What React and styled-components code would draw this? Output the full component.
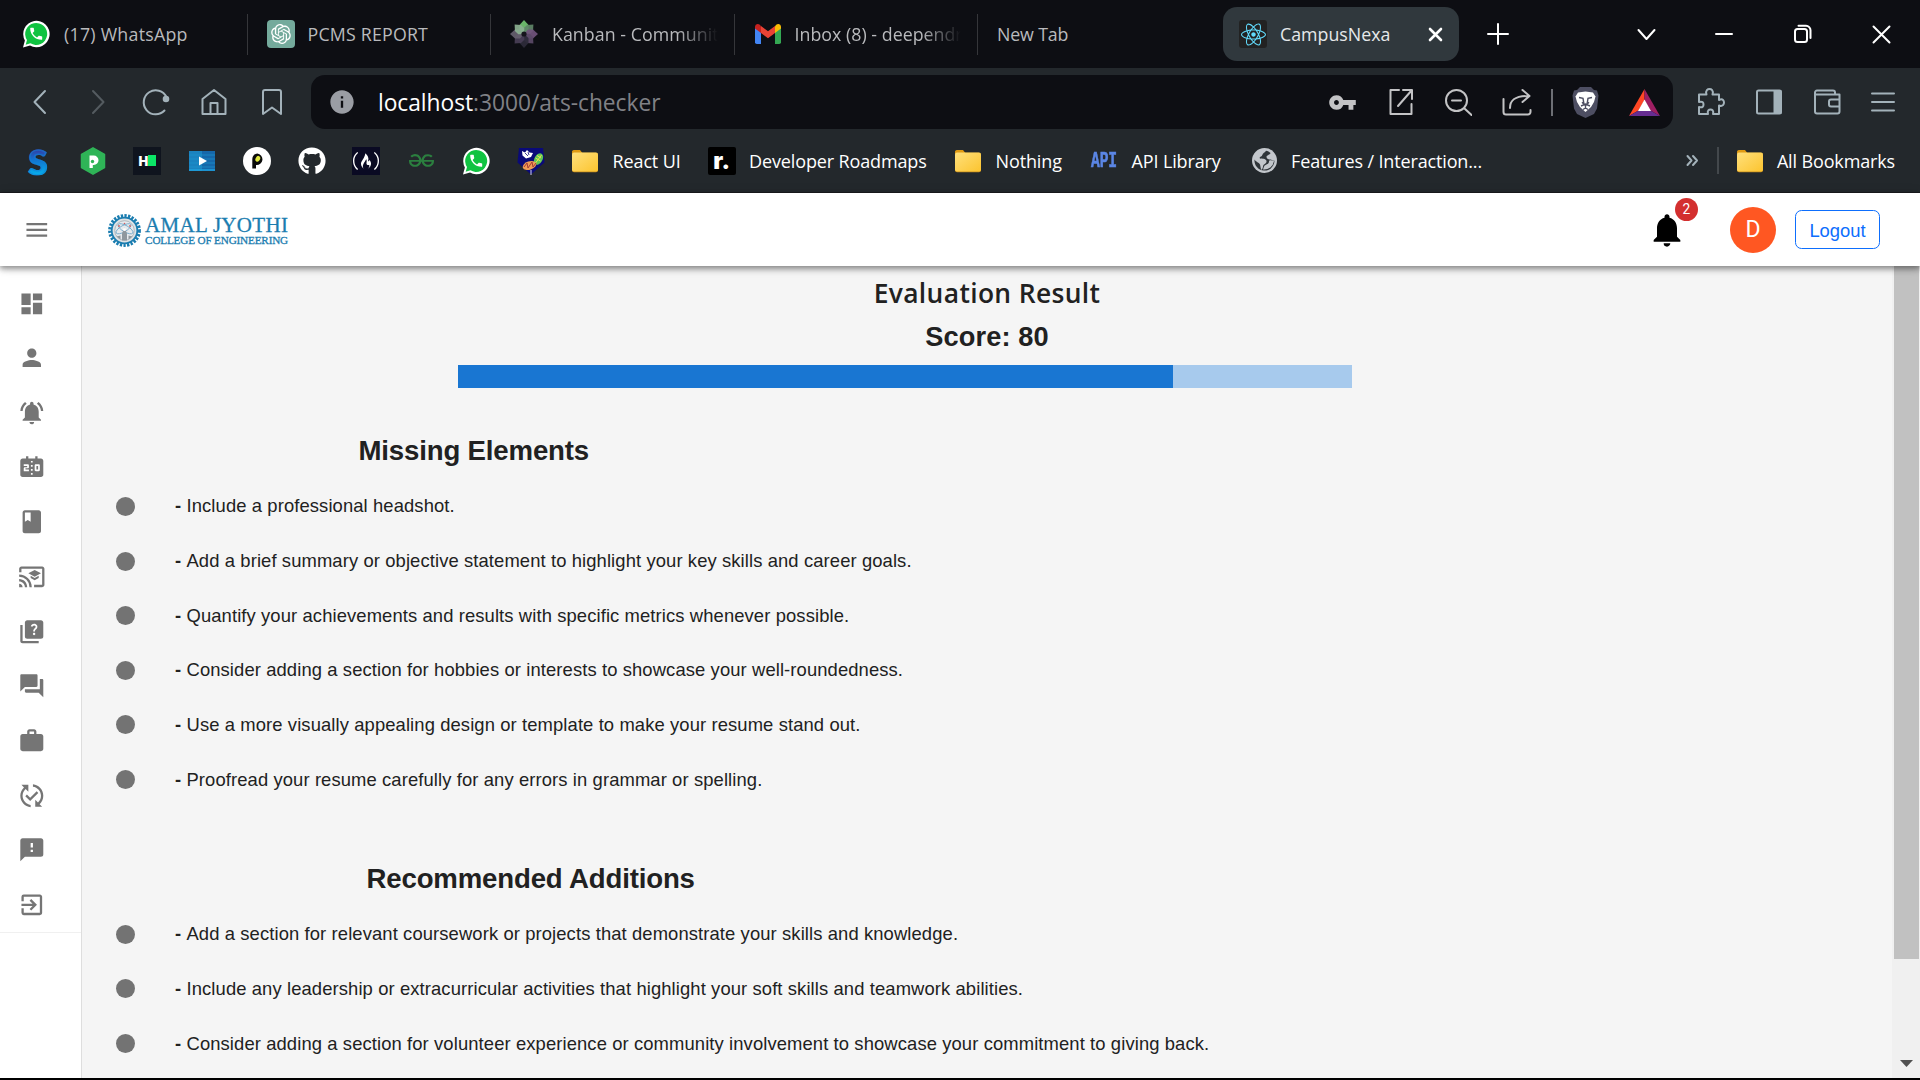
import React from "react";
import styled, { createGlobalStyle } from "styled-components";
import {
  MdDashboard, MdPerson, MdNotificationsActive, MdScoreboard, MdBook, MdCastForEducation,
  MdQuiz, MdQuestionAnswer, MdWork, MdPublishedWithChanges, MdFeedback, MdExitToApp,
  MdMenu, MdNotifications, MdVpnKey, MdPhone, MdInfo,
} from "react-icons/md";
import { FaGithub, FaReact } from "react-icons/fa";
import { SiFreecodecamp, SiGeeksforgeeks } from "react-icons/si";
import { RiOpenaiFill } from "react-icons/ri";

const Global = createGlobalStyle`
  * { box-sizing: border-box; }
  body { margin: 0; background: #000; overflow: hidden; font-family: "Liberation Sans", Arial, sans-serif; }
  svg { display: block; flex: none; }
`;

const Screen = styled.div`
  width: 1920px; height: 1080px; display: flex; flex-direction: column;
  background: #f5f5f5; border-bottom: 2px solid #000; overflow: hidden;
`;

const uiFont = `"Open Sans", "Noto Sans", sans-serif`;

/* ---------- browser chrome ---------- */
const TabStrip = styled.div`
  height: 68px; flex: none; background: #0d0e13; display: flex; align-items: center; padding: 0 29px 0 4px;
`;
const Tab = styled.div`
  width: ${(p) => p.$w || 243.5}px; height: 41px; padding: 0 ${(p) => p.$pr ?? 16}px 0 ${(p) => p.$pl ?? 19}px;
  display: flex; align-items: center; gap: ${(p) => p.$gap || 13}px;
  border-right: ${(p) => (p.$last ? "none" : "1.5px solid #35363a")};
`;
const ActiveTab = styled.div`
  width: 236px; height: 54px; border-radius: 14px; background: #30383d;
  display: flex; align-items: center; padding: 0 16px; margin-right: 28px; gap: 13px;
`;
const TabText = styled.span`
  font: 400 17.8px ${uiFont}; letter-spacing: ${(p) => p.$ls ?? -0.14}px; color: ${(p) => p.$c || "#b9babd"};
  white-space: nowrap; overflow: hidden; flex: 1; line-height: 28px;
  ${(p) => p.$fade && "mask-image: linear-gradient(90deg, #000 calc(100% - 40px), transparent);"}
`;
const Spacer = styled.div`flex: 1;`;
const WindowButtons = styled.div`display: flex; align-items: center; gap: 59.4px;`;

const Toolbar = styled.div`
  height: 68px; flex: none; background: #23282c; display: flex; align-items: center; padding: 0 22px 0 25.5px; color: #a3b2ba;
`;
const NavButtons = styled.div`display: flex; width: 285.5px; gap: 30.2px; padding-bottom: 1px;`;
const AddressBar = styled.div`
  width: 1362px; height: 54px; border-radius: 14px; background: #0d0e13;
  display: flex; align-items: center; padding: 0 13.5px 0 17px;
`;
const Url = styled.div`
  font: 400 22.8px ${uiFont}; letter-spacing: -0.05px; color: #808186; margin-left: 22px; flex: 1; line-height: 34px; padding-top: 1.5px;
  b { font-weight: 400; color: #fff; }
`;
const AddressIcons = styled.div`display: flex; align-items: center; gap: 29.5px; color: #c3c3c5;`;
const Rule = styled.div`
  width: 1.5px; height: ${(p) => p.$h}px; background: ${(p) => p.$c}; margin: 0 ${(p) => p.$mr}px 0 ${(p) => p.$ml}px;
`;
const ToolIcons = styled.div`display: flex; align-items: center; gap: 29.9px; margin-left: 24px;`;

const Bookmarks = styled.div`
  height: 57px; flex: none; background: #23282c; display: flex; align-items: center;
  padding: 0 25px 7px 10.6px; border-bottom: 1px solid #1b1c20; color: #a3b2ba;
`;
const IconMark = styled.div`width: 54.75px; flex: none; display: flex; justify-content: center;`;
const TextMarks = styled.div`display: flex; margin-left: 13px;`;
const Mark = styled.div`
  width: ${(p) => (p.$w ? `${p.$w}px` : "auto")}; flex: none; display: flex; align-items: center; gap: ${(p) => p.$gap || 13.5}px;
  font: 400 18px ${uiFont}; letter-spacing: -0.14px; color: #fff; white-space: nowrap; line-height: 28px;
`;
const Tile = styled.div`
  width: ${(p) => p.$s || 28}px; height: ${(p) => p.$h || p.$s || 28}px; flex: none; background: ${(p) => p.$bg}; color: #fff;
  border-radius: ${(p) => p.$r || 0}px; display: flex; align-items: center; justify-content: center;
`;
const HeavyS = styled.span`
  font: 900 35px/28px Lato, sans-serif; background: linear-gradient(#3a2f9a, #1273d0 45%, #06b0ec);
  -webkit-background-clip: text; color: transparent; -webkit-text-stroke: 1.5px #1180d888;
`;
const TileText = styled.span`
  font: 900 ${(p) => p.$s || 17}px/20px Inter, sans-serif; color: #fff;
`;
const ApiText = styled.span`
  font: 700 14.6px/20px "Liberation Mono", monospace; color: #5b86e5; width: 26px; transform: scaleY(1.45);
  -webkit-text-stroke: .4px #5b86e5;
`;

/* ---------- application ---------- */
const AppHeader = styled.header`
  height: 73px; flex: none; background: #fff; display: flex; align-items: center; padding: 0 40px 0 23px;
  box-shadow: 0 2px 5px rgba(0,0,0,.28), 0 4px 6px rgba(0,0,0,.16), 0 1px 11px rgba(0,0,0,.13); z-index: 2; position: relative;
`;
const Logo = styled.div`display: flex; align-items: center; gap: 4.5px; margin-left: 57px; padding-top: 2px; color: #1b7db0;`;
const LogoText = styled.div`
  display: flex; flex-direction: column; font-family: "Liberation Serif", serif; white-space: nowrap; width: 145px;
  -webkit-text-stroke: .3px #1b7db0;
  strong { font-weight: 400; font-size: 21px; line-height: 18px; letter-spacing: .3px; }
  span { font-size: 11.2px; line-height: 12px; letter-spacing: -.17px; }
`;
const BellWrap = styled.div`position: relative; width: 40px; height: 40px; margin-right: 43px;`;
const Count = styled.span`
  position: absolute; left: 28px; top: -11.5px; width: 23px; height: 23px; border-radius: 50%;
  background: #d32f2f; color: #fff; font: 400 13.8px/23px Roboto, sans-serif; text-align: center;
`;
const Avatar = styled.div`
  width: 46px; height: 46px; border-radius: 50%; background: #ff5722; color: #fff;
  font: 400 23px/46px Roboto, sans-serif; text-align: center; margin-right: 19px;
`;
const Logout = styled.button`
  width: 85px; height: 39px; border: 1.3px solid #0d6efd; border-radius: 6.5px; background: #fff; color: #0d6efd;
  font: 400 18.4px "Liberation Sans", Arial, sans-serif; padding: 2px 0 0;
`;
const Body = styled.div`flex: 1; min-height: 0; display: flex;`;
const Sidebar = styled.nav`width: 82px; background: #fff; border-right: 1px solid #dedede; flex: none;`;
const SideList = styled.div`border-bottom: 1px solid #f0f0f0; padding: 10.3px 18px 0 0; display: flex; flex-direction: column; height: 667px;`;
const SideItem = styled.div`height: 54.65px; display: flex; align-items: center; justify-content: center; color: #757575;`;
const Main = styled.main`flex: 1; min-width: 0; padding-top: 5px; color: #212121; overflow: hidden;`;
const Title = styled.h1`
  margin: 0; height: 44px; line-height: 44px; text-align: center; white-space: nowrap;
  font-family: ${(p) => (p.$round ? `"Open Sans", sans-serif` : `"Liberation Sans", Arial, sans-serif`)};
  font-weight: ${(p) => (p.$round ? 600 : 700)}; font-size: ${(p) => (p.$round ? 26.4 : 27.2)}px;
  letter-spacing: ${(p) => (p.$round ? 0.36 : 0.1)}px;
`;
const Track = styled.div`width: 894px; height: 23px; margin: 6px 0 41px 376px; background: #a7caed;`;
const Fill = styled.div`height: 100%; background: #1976d2;`;
const Heading = styled.h2`
  margin: 0 0 6.2px; padding-left: ${(p) => p.$left}px; height: 44px; font-size: 27.6px; line-height: 44px; font-weight: 700; letter-spacing: -.16px;
`;
const List = styled.ul`list-style: none; margin: 0 0 50px; padding: 0;`;
const Item = styled.li`
  height: 54.62px; display: flex; align-items: center; padding-left: 34px; font-size: 18.4px; letter-spacing: .108px; white-space: nowrap;
`;
const Bullet = styled.i`width: 19px; height: 19px; border-radius: 50%; background: #737373; margin-right: 40px;`;
const Dash = styled.b`width: 11.5px; font-weight: 700;`;
const Scroll = styled.div`
  width: 28px; flex: none; background: #f0f0f0; padding: 0 1px 11px 2px; display: flex; flex-direction: column; justify-content: space-between; align-items: center;
`;
const Thumb = styled.div`width: 25px; height: 693px; background: #c1c1c1;`;

/* ---------- drawings ---------- */
const Stroke = ({ w = 28, h = 28, sw = 2, children }) => (
  <svg width={w} height={h} viewBox={`0 0 ${w} ${h}`} fill="none" stroke="currentColor" strokeWidth={sw} strokeLinecap="round" strokeLinejoin="round">{children}</svg>
);
const WhatsApp = () => (
  <svg width="28" height="28" viewBox="0 0 28 28">
    <path d="M1 27.5 2.9 20.4A13.2 13.2 0 1 1 8 25.5z" fill="#fff" />
    <path d="M3.7 24.8 5 20A11 11 0 1 1 8.4 23.3z" fill="#10c341" />
    <g transform="translate(6.2 5.8)"><MdPhone size={16} color="#fff" /></g>
  </svg>
);
const Folder = () => (
  <svg width="28" height="28" viewBox="0 0 28 28">
    <path d="M1 4.5A1.8 1.8 0 0 1 2.8 3H9l2.4 3H25v8H1z" fill="#e09a12" />
    <rect x="1" y="5.8" width="26" height="19.4" rx="2" fill="#c98f1c" />
    <rect x="1" y="5.4" width="26" height="19" rx="2" fill="url(#fold)" />
    <defs><linearGradient id="fold" x1="0" y1="0" x2="1" y2="1"><stop stopColor="#ffe07c" /><stop offset="1" stopColor="#fcc42f" /></linearGradient></defs>
  </svg>
);
const Globe = () => (
  <svg width="27" height="27" viewBox="0 0 27 27">
    <circle cx="13.5" cy="13.5" r="12.5" fill="#c3c7cc" />
    <path d="M13 4.500c4-.8 7 1 8.500 4l-4 1.500-1 3-3.500.5-2 3h-3L5 13.500c-.5-4 3-8 8-9z" fill="#23282c" opacity="0" />
    <path d="M15 3.800c-1 2.200-3.200 2-3.700 4.200-.3 1.500-2.300 1.500-2.800 3 1.500 1.500 5 0 6.500 2s-.5 3.500-2 4.500-.5 3.500-2.500 5.500c-1-1.500-1-4-1.500-5.500S4.500 14.500 3.500 12.500c-.5 5 3 10.500 9.500 11 6 .3 10.500-4.500 10.500-10-1.500 1-2.500-1-4-1s-4-.5-4-2.500 3.500-2 4-4c-1.200-1.200-2.700-2-4.500-2.200z" fill="#23282c" opacity=".92" />
    <path d="M12 22.500c1-2 .5-3.500 2.500-4.500s3.500-1.500 3.500-3.500 3-1 5-.5a10 10 0 0 1-11 8.500z" fill="#c3c7cc" />
  </svg>
);
const Kanban = () => (
  <svg width="28" height="28" viewBox="-14 -14 28 28">
    {["#72c472", "#5f8568", "#71547d", "#5b4a68", "#2e2b3b", "#493f57", "#66606f", "#8bb091"].map((c, i) => (
      <path key={i} d="M0-14 4.500-9V-4L0 0-4.500-4V-9z" fill={c} opacity=".92" transform={`rotate(${i * 45}) ${i % 2 ? "scale(.95)" : ""}`} />
    ))}
    <circle r="2.6" fill="#15151c" />
  </svg>
);
const Gmail = () => (
  <svg width="26" height="20" viewBox="0 0 26 20">
    <path d="M0 3v15.200a1.800 1.800 0 0 0 1.800 1.800H6V8z" fill="#4285f4" />
    <path d="M26 3v15.200a1.800 1.800 0 0 1-1.800 1.800H20V8z" fill="#34a853" />
    <path d="M20 2.200V9l6-4.500V3c0-2.700-2.800-3.800-4.800-2.200z" fill="#fbbc04" />
    <path d="M6 9V2l7 5.300L20 2v7l-7 5.300z" fill="#ea4335" />
    <path d="M0 3v1.500L6 9V2.200L4.800.8C2.800-.8 0 .3 0 3z" fill="#c5221f" />
  </svg>
);
const Hexagon = () => (
  <svg width="26" height="28" viewBox="0 0 26 28">
    <path d="M13 .8 24.500 7.500V20.500L13 27.200 1.500 20.500V7.500z" fill="#2fb457" stroke="#2fb457" strokeWidth="1.500" strokeLinejoin="round" />
    <path d="M9.500 8.500h4.300a4.700 4.700 0 0 1 0 9.400h-1v3h-3.300z" fill="#fff" />
    <circle cx="12.500" cy="14.500" r="1.700" fill="#2fb457" />
  </svg>
);
const Player = () => (
  <svg width="26" height="20" viewBox="0 0 26 20">
    <path d="M0 0h26v20H0z" fill="#1b83c0" /><path d="M13 0h13v20H13z" fill="#1668aa" />
    <path d="M0 4h26M0 8h26M0 12h26M0 16h26" stroke="#1c96cf" strokeWidth=".7" /><path d="M10 5.500 18 10l-8 4.500z" fill="#fff" />
    <path d="M0 19h26" stroke="#21a0dc" strokeWidth="1.500" />
  </svg>
);
const PeerCircle = () => (
  <svg width="28" height="28" viewBox="0 0 28 28">
    <circle cx="14" cy="14" r="14" fill="#fff" />
    <path d="M14.300 6.500A5.700 5.700 0 1 1 13 18v3.500H9.300V12a5.500 5.500 0 0 1 5-5.500z" fill="#0b0b0b" />
    <ellipse cx="14.800" cy="11.800" rx="2.200" ry="3" fill="#e1ea3f" transform="rotate(30 14.800 11.800)" />
  </svg>
);
const Crest = () => (
  <svg width="28" height="28" viewBox="0 0 28 28">
    <path d="M2 1h24l1.500 14.500L14 27.500.5 15.500z" fill="#0a0a78" />
    <path d="M5 4l3 1.500 2-2.500 2.500 2.500 3.500.5-2 4-5 1.500-3.500-3z" fill="#fff" /><path d="M8 6l3 3M11 5l1 3" stroke="#0a0a78" strokeWidth=".8" />
    <ellipse cx="21.500" cy="12" rx="4" ry="6.200" transform="rotate(30 21.500 12)" fill="#5dc657" /><path d="M18.500 16l6-8M18.500 11l5 3M20 8.500l4 2.500" stroke="#e8e34d" strokeWidth="1" />
    <ellipse cx="12.500" cy="18.500" rx="7" ry="4.200" transform="rotate(-18 12.500 18.500)" fill="#ef9b55" />
    <path d="M7 20l3-4 1 5 4-6 1 5 3-4" stroke="#a43b35" fill="none" /><path d="M14 23v5" stroke="#d7d7e8" />
  </svg>
);
const Lion = () => (
  <svg width="27" height="31" viewBox="0 0 27 31">
    <path d="M8 0h11l3 3 3 .5 1.500 5-1.500 13L22 27l-8.500 4L5 27 2 21.500.5 8.500 2 3.500 5 3z" fill="#4d4e62" />
    <path d="M6 5.500 13.500 4.500 21 5.500l2.500 4-1.500 5.500-3 5-5.500 5-5.500-5-3-5L3.500 9.500z" fill="#fff" />
    <path d="M7 10.500l4 .8 1 6-2-2M20 10.500l-4 .8-1 6 2-2M9 19l4.500-2 4.500 2M13.500 18v4M11 22.500l2.500-1.500 2.500 1.500" stroke="#4d4e62" strokeWidth="1.400" fill="none" />
  </svg>
);
const Bat = () => (
  <svg width="31" height="27" viewBox="0 0 31 27">
    <path d="M15.500 0V11L9.500 21.500 0 27z" fill="#ff4724" /><path d="M15.500 0 31 27l-9.500-5.500-6-10.500z" fill="#9e1f63" />
    <path d="M0 27 9.500 21.500h12L31 27z" fill="#662d91" /><path d="M15.500 10.500 22 22H9z" fill="#fff" />
  </svg>
);
const Seal = () => (
  <svg width="33" height="33" viewBox="-16.500 -16.500 33 33">
    <circle r="14.700" fill="none" stroke="#1b7db0" strokeWidth="3.400" strokeDasharray="2.300 1.318" />
    <circle r="12.800" fill="#dfe3e6" stroke="#1b7db0" strokeWidth="1.800" /><circle r="9.800" fill="#e6eaed" stroke="#9aa5ac" strokeWidth=".7" />
    <g fill="none" stroke="#6fa6c8" strokeWidth=".8"><ellipse rx="8.500" ry="3.200" cy="-2" transform="rotate(30)" /><ellipse rx="8.500" ry="3.200" cy="-2" transform="rotate(-30)" /></g>
    <path d="M-2.500 10V3L0-3l2.500 6v7zM-8 6l4-1v4zM8 6l-4-1v4z" fill="#8f989e" /><circle cy="-1" r="1.500" fill="#fff" />
    <circle cx="-5.500" cy="-4.500" r=".9" fill="#d65c5c" /><circle cx="5.500" cy="-4.500" r=".9" fill="#d65c5c" /><circle cy="-7" r=".8" fill="#d65c5c" />
  </svg>
);

const sideIcons = [
  MdDashboard, MdPerson, MdNotificationsActive, MdScoreboard, MdBook, MdCastForEducation,
  MdQuiz, MdQuestionAnswer, MdWork, MdPublishedWithChanges, MdFeedback, MdExitToApp,
];
const missing = [
  "Include a professional headshot.",
  "Add a brief summary or objective statement to highlight your key skills and career goals.",
  "Quantify your achievements and results with specific metrics whenever possible.",
  "Consider adding a section for hobbies or interests to showcase your well-roundedness.",
  "Use a more visually appealing design or template to make your resume stand out.",
  "Proofread your resume carefully for any errors in grammar or spelling.",
];
const recommended = [
  "Add a section for relevant coursework or projects that demonstrate your skills and knowledge.",
  "Include any leadership or extracurricular activities that highlight your soft skills and teamwork abilities.",
  "Consider adding a section for volunteer experience or community involvement to showcase your commitment to giving back.",
];

const Points = ({ items }) => (
  <List>
    {items.map((t) => (
      <Item key={t}><Bullet /><Dash>-</Dash>{t}</Item>
    ))}
  </List>
);

export default function App() {
  const score = 80;
  return (
    <Screen>
      <Global />
      <TabStrip>
        <Tab $pl={18} $gap={14}><WhatsApp /><TabText $ls={0.25}>(17) WhatsApp</TabText></Tab>
        <Tab><Tile $bg="#74aa9c" $r={4}><RiOpenaiFill size={24} /></Tile><TabText $ls={0.2}>PCMS REPORT</TabText></Tab>
        <Tab $gap={14}><Kanban /><TabText $fade $ls={0.05}>Kanban - Communit</TabText></Tab>
        <Tab $pl={20} $gap={14}><Gmail /><TabText $fade $ls={0.02}>Inbox (8) - deependr</TabText></Tab>
        <Tab $last $w={245} $pl={19}><TabText>New Tab</TabText></Tab>
        <ActiveTab>
          <Tile $bg="#222" $r={3}><FaReact size={25} color="#61dafb" /></Tile>
          <TabText $c="#e6e8ea" $ls={0}>CampusNexa</TabText>
          <Stroke w={15} h={15} sw={2.6}><g stroke="#fff"><path d="M2 2l11 11M13 2 2 13" /></g></Stroke>
        </ActiveTab>
        <Stroke w={22} h={22} sw={2}><path d="M11 1v20M1 11h20" stroke="#fff" /></Stroke>
        <Spacer />
        <WindowButtons>
          <Stroke w={19} h={19} sw={2}><path d="M1.500 5l8 9 8-9" stroke="#fff" /></Stroke>
          <Stroke w={18} h={20} sw={2}><path d="M1 10h16" stroke="#fff" /></Stroke>
          <Stroke w={20} h={20} sw={2}><g stroke="#fff"><rect x="2" y="5" width="12" height="13" rx="2.500" /><path d="M5.500 1.800H13a4.500 4.500 0 0 1 4.500 4.500V14" /></g></Stroke>
          <Stroke w={19} h={19} sw={2}><path d="M1.500 1.500l16 16M17.500 1.500l-16 16" stroke="#fff" /></Stroke>
        </WindowButtons>
      </TabStrip>

      <Toolbar>
        <NavButtons>
          <Stroke><path d="M19 3 8.500 14 19 25" /></Stroke>
          <Stroke><path d="M9 3l10.500 11L9 25" stroke="#545b60" /></Stroke>
          <Stroke><path d="M22.500 22.500A12 12 0 1 1 24.500 9" /><circle cx="24" cy="11" r="2.300" fill="currentColor" /></Stroke>
          <Stroke><path d="M2.500 11 14 2l11.500 9v15h-23zM10.500 26V15h7v11" /></Stroke>
          <Stroke><path d="M5 4a2 2 0 0 1 2-2h14a2 2 0 0 1 2 2v22l-9-6.500L5 26z" /></Stroke>
        </NavButtons>
        <AddressBar>
          <MdInfo size={28} color="#9a9da4" />
          <Url><b>localhost</b>:3000/ats-checker</Url>
          <AddressIcons>
            <MdVpnKey size={29} />
            <Stroke><path d="M12 2H3.500v24h21v-10M16 2h9v9M25 2 11 18" /></Stroke>
            <Stroke><circle cx="12.500" cy="12.500" r="10.500" /><path d="M8 12.500h9M20.500 20.500l7 6.500" /></Stroke>
            <Stroke w={30}><path d="M1.500 11v13a2.500 2.500 0 0 0 2.500 2.500h22a2.500 2.500 0 0 0 2.500-2.500v-2M8 20c0-8 5-12 18-12M20.500 2l7 6-7 6" /></Stroke>
            <Rule $h={27} $c="#6d6f75" $ml={-10} $mr={-10} />
            <Lion /><Bat />
          </AddressIcons>
        </AddressBar>
        <ToolIcons>
          <Stroke sw={2}><path d="M2 6.500H9.500C8 2 11 1 12.500 1S17 2 15.500 6.500H22V12c4-2 5 1 5 2.500S26 19 22 17.500V26H16c1-3.500-1-4.500-2.500-4.500S10 22.500 11 26H2v-7c4 1 4.500-1 4.500-2.500S6 13 2 14z" /></Stroke>
          <Stroke sw={2}><rect x="2" y="2.500" width="24" height="23" rx="1.500" /><path d="M19.500 3H25.500V25H19.500z" fill="currentColor" /></Stroke>
          <Stroke sw={2}><path d="M2 4.500A2 2 0 0 1 4 2.500H20a2 2 0 0 1 2 2V6.500H26.500V23.500a2 2 0 0 1-2 2H4a2 2 0 0 1-2-2zM2 6.500H22M26.500 11.500H18a2 2 0 0 0-2 2v3a2 2 0 0 0 2 2h8.500" /></Stroke>
          <Stroke w={24} sw={2}><path d="M1 5.500h22M1 14h22M1 22.500h22" /></Stroke>
        </ToolIcons>
      </Toolbar>

      <Bookmarks>
        <IconMark><HeavyS>S</HeavyS></IconMark>
        <IconMark><Hexagon /></IconMark>
        <IconMark><Tile $bg="#0f141e"><TileText $s={13}>H</TileText><Tile $s={8} $h={11} $bg="#0be566" /></Tile></IconMark>
        <IconMark><Player /></IconMark>
        <IconMark><PeerCircle /></IconMark>
        <IconMark><FaGithub size={28} color="#fff" /></IconMark>
        <IconMark><Tile $bg="#0a0a23"><SiFreecodecamp size={26} /></Tile></IconMark>
        <IconMark><SiGeeksforgeeks size={25} color="#2b7f3f" /></IconMark>
        <IconMark><WhatsApp /></IconMark>
        <IconMark><Crest /></IconMark>
        <TextMarks>
          <Mark $w={136.5}><Folder />React UI</Mark>
          <Mark $w={246.5}><Tile $bg="#000" $r={2}><TileText $s={23}>r.</TileText></Tile>Developer Roadmaps</Mark>
          <Mark $w={137}><Folder />Nothing</Mark>
          <Mark $w={159.5} $gap={14.5}><ApiText>API</ApiText>API Library</Mark>
          <Mark $w={240} $gap={13.5}><Globe />Features / Interaction...</Mark>
        </TextMarks>
        <Spacer />
        <Stroke w={13} h={13} sw={2}><path d="M1.500 2l4 4.500-4 4.500M7 2l4 4.500L7 11" /></Stroke>
        <Rule $h={27} $c="#43484c" $mr={17} $ml={18} />
        <Mark $gap={13}><Folder />All Bookmarks</Mark>
      </Bookmarks>

      <AppHeader>
        <MdMenu size={27.6} color="#757575" />
        <Logo><Seal /><LogoText><strong>AMAL JYOTHI</strong><span>COLLEGE OF ENGINEERING</span></LogoText></Logo>
        <Spacer />
        <BellWrap><MdNotifications size={40} color="#000" /><Count>2</Count></BellWrap>
        <Avatar>D</Avatar>
        <Logout>Logout</Logout>
      </AppHeader>

      <Body>
        <Sidebar>
          <SideList>
            {sideIcons.map((Icon, i) => <SideItem key={i}><Icon size={27.6} /></SideItem>)}
          </SideList>
        </Sidebar>
        <Main>
          <Title $round>Evaluation Result</Title>
          <Title as="h2">Score: {score}</Title>
          <Track><Fill style={{ width: `${score}%` }} /></Track>
          <Heading $left={276.5}>Missing Elements</Heading>
          <Points items={missing} />
          <Heading $left={284.5}>Recommended Additions</Heading>
          <Points items={recommended} />
        </Main>
        <Scroll>
          <Thumb />
          <svg width="13" height="7" viewBox="0 0 13 7"><path d="M0 0h13L6.500 7z" fill="#505050" /></svg>
        </Scroll>
      </Body>
    </Screen>
  );
}
